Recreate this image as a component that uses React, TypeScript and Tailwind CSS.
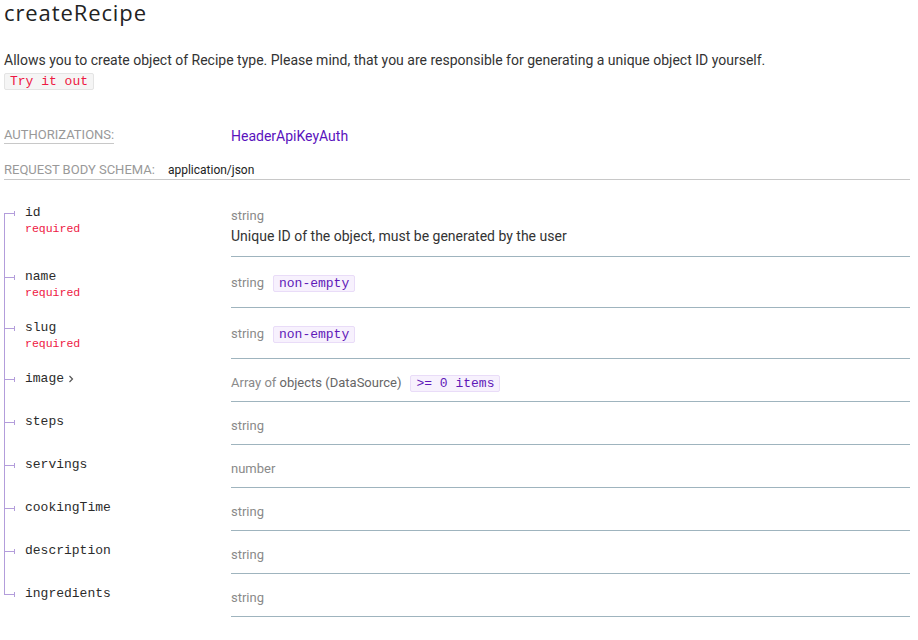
import React from "react";

const LINE = "border-[#b39ddb]";

function Tree({ first, last }: { first?: boolean; last?: boolean }) {
  return (
    <div className="flex w-[11px] shrink-0 flex-col">
      <div className={`h-[18px] ${first ? "" : `border-l ${LINE}`}`} />
      <div className="flex h-[5px]">
        <div className="flex w-[10px] flex-col">
          <div className={`h-[2px] ${first ? "" : `border-l ${LINE}`}`} />
          <div className="h-px bg-[#b39ddb]" />
          <div className={`h-[2px] ${last ? "" : `border-l ${LINE}`}`} />
        </div>
        <div className="h-[5px] w-px bg-[#b39ddb]" />
      </div>
      <div className={`flex-1 ${last ? "" : `border-l ${LINE}`}`} />
    </div>
  );
}

function Badge({ children }: { children: React.ReactNode }) {
  return (
    <span className="ml-[9px] inline-block rounded-[2px] border border-[#e9dcf8] bg-[#f7f1fd] px-[5px] text-[13px] leading-[15px] text-[#6018b8] [font-family:'Liberation_Mono',monospace]">
      {children}
    </span>
  );
}

type RowProps = {
  name: string;
  required?: boolean;
  chevron?: boolean;
  first?: boolean;
  last?: boolean;
  rightClass: string;
  children: React.ReactNode;
};

function Row({ name, required, chevron, first, last, rightClass, children }: RowProps) {
  return (
    <div className="flex">
      <div className="flex w-[227px] shrink-0">
        <Tree first={first} last={last} />
        <div className="pl-[10px] pt-[10px] pb-[10px]">
          <div className="flex items-center text-[13px] leading-5 text-[#2b2b2b] [font-family:'Liberation_Mono',monospace]">
            {name}
            {chevron && (
              <svg width="8" height="10" viewBox="0 0 8 10" className="ml-[3px]">
                <path d="M2.5 2 L5.5 5 L2.5 8" fill="none" stroke="#555" strokeWidth="1.2" />
              </svg>
            )}
          </div>
          {required && (
            <div className="text-[11.5px] leading-[11px] text-[#ee1843] [font-family:'Liberation_Mono',monospace]">
              required
            </div>
          )}
        </div>
      </div>
      <div className={`flex-1 border-b border-[#9fb4be] ${rightClass}`}>{children}</div>
    </div>
  );
}

function TypeLine({ children }: { children: React.ReactNode }) {
  return (
    <div className="flex h-5 items-center text-[13px] text-[#8a8a8a] [font-family:Roboto,sans-serif]">
      {children}
    </div>
  );
}

export default function App() {
  return (
    <div className="min-h-[640px] bg-white pl-[4px] pr-[8px] [font-family:Roboto,sans-serif]">
      <h2 className="text-[22px] leading-[25px] font-normal tracking-[0.9px] text-[#222] [font-family:'Open_Sans',sans-serif]">
        createRecipe
      </h2>
      <p className="mt-[25px] text-[14px] leading-5 text-[#333]">
        Allows you to create object of Recipe type. Please mind, that you are responsible for generating a unique object ID yourself.
      </p>
      <div className="mt-[3px] flex">
        <span className="rounded-[2px] border border-[#e4e4e4] bg-[#f5f5f5] px-[5px] text-[13px] leading-[15px] text-[#ee1843] [font-family:'Liberation_Mono',monospace]">
          Try it out
        </span>
      </div>

      <div className="mt-[37px] flex items-center">
        <div className="flex w-[227px] shrink-0">
          <span className="border-b border-[#c8c8c8] text-[13px] leading-4 uppercase text-[#999]">
            Authorizations:
          </span>
        </div>
        <span className="text-[14px] leading-4 text-[#5a12bd]">HeaderApiKeyAuth</span>
      </div>

      <div className="mt-[18px] flex items-center border-b border-[#c8c8c8] pb-px">
        <span className="text-[13px] leading-4 uppercase text-[#999]">Request Body schema:</span>
        <span className="ml-[13px] text-[12px] leading-4 text-[#222]">application/json</span>
      </div>

      <div className="mt-[13px]">
        <Row name="id" required first rightClass="pt-[13px] pb-[10px]">
          <TypeLine>string</TypeLine>
          <div className="text-[14px] leading-5 text-[#333]">
            Unique ID of the object, must be generated by the user
          </div>
        </Row>
        <Row name="name" required rightClass="pt-[16px]">
          <TypeLine>
            string<Badge>non-empty</Badge>
          </TypeLine>
        </Row>
        <Row name="slug" required rightClass="pt-[16px]">
          <TypeLine>
            string<Badge>non-empty</Badge>
          </TypeLine>
        </Row>
        <Row name="image" chevron rightClass="pt-[14px] pb-[8px]">
          <TypeLine>
            Array of&nbsp;<span className="text-[#666]">objects (DataSource)</span>
            <Badge>&gt;= 0 items</Badge>
          </TypeLine>
        </Row>
        <Row name="steps" rightClass="pt-[14px] pb-[8px]">
          <TypeLine>string</TypeLine>
        </Row>
        <Row name="servings" rightClass="pt-[14px] pb-[8px]">
          <TypeLine>number</TypeLine>
        </Row>
        <Row name="cookingTime" rightClass="pt-[14px] pb-[8px]">
          <TypeLine>string</TypeLine>
        </Row>
        <Row name="description" rightClass="pt-[14px] pb-[8px]">
          <TypeLine>string</TypeLine>
        </Row>
        <Row name="ingredients" last rightClass="pt-[14px] pb-[8px]">
          <TypeLine>string</TypeLine>
        </Row>
      </div>
    </div>
  );
}
